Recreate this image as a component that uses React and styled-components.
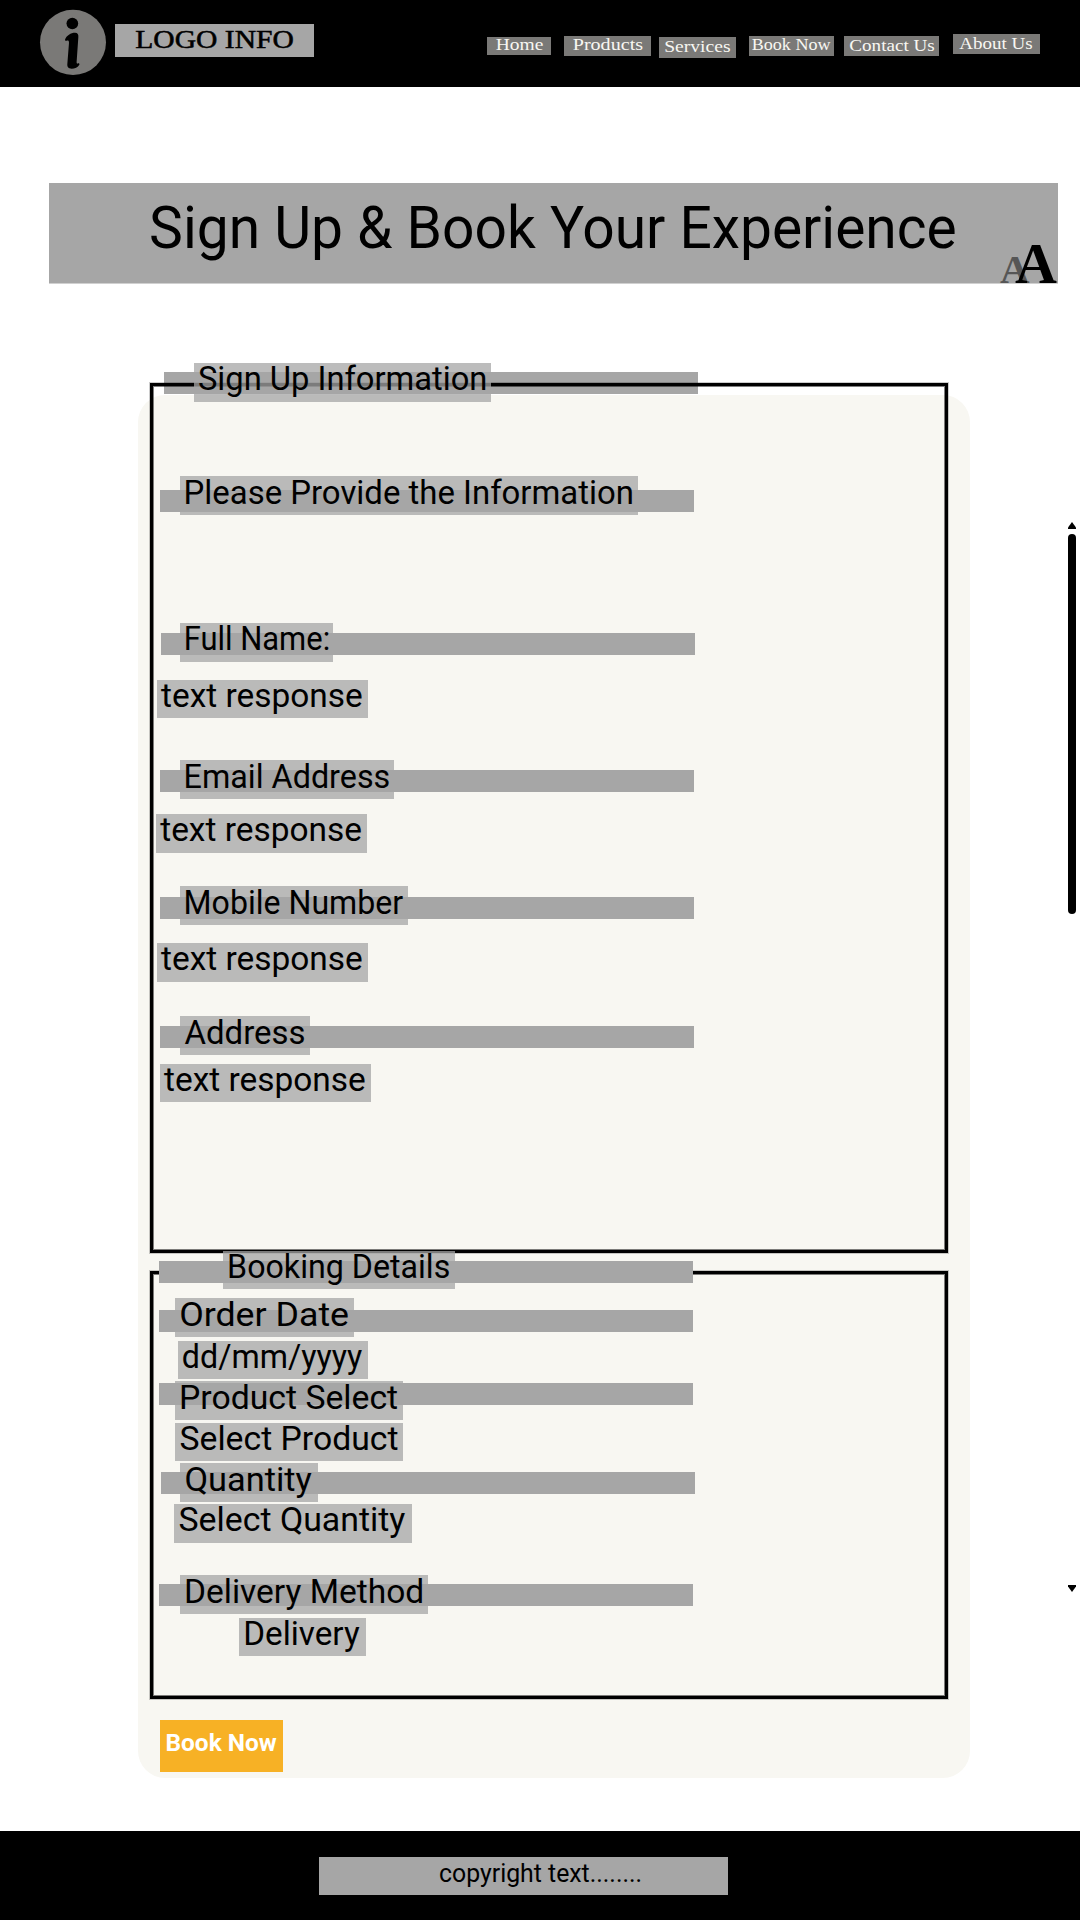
import React from "react";
import styled, { createGlobalStyle } from "styled-components";

const SANS = 'Roboto, "Liberation Sans", sans-serif';
const SERIF = '"Liberation Serif", "DejaVu Serif", serif';

const GlobalStyle = createGlobalStyle`
  body {
    margin: 0;
    background: #ffffff;
  }
  *, *::before, *::after {
    box-sizing: border-box;
  }
`;

/* ---------- text set to a given measure ---------- */

const Line = styled.span`
  display: block;
  width: max-content;
  white-space: pre;
  transform-origin: 0 0;
  font: ${(p) => p.$font};
  line-height: inherit;
`;

let ctx;
function measure(text, font) {
  if (!ctx) ctx = document.createElement("canvas").getContext("2d");
  ctx.font = font;
  const m = ctx.measureText(text);
  return { left: m.actualBoundingBoxLeft, right: m.actualBoundingBoxRight };
}

/* Stretches a line horizontally so its ink starts at `inset` and spans `width`. */
function Fit({ text, font, inset, width }) {
  const m = measure(text, font);
  const scale = width / (m.left + m.right);
  const shift = inset + m.left * scale;
  return (
    <Line $font={font} style={{ transform: `translateX(${shift}px) scaleX(${scale})` }}>
      {text}
    </Line>
  );
}

/* ---------- page ---------- */

const Page = styled.div`
  display: flex;
  flex-direction: column;
  width: 1080px;
  height: 1920px;
  overflow: hidden;
  background: #ffffff;
  color: #000000;
  isolation: isolate;
`;

const Header = styled.header`
  display: flex;
  align-items: flex-start;
  flex: none;
  height: 87px;
  background: #000000;
`;

const LogoMark = styled.svg`
  flex: none;
  width: 74px;
  height: 76px;
  margin: 4px 0 0 36px;
`;

const LogoName = styled.div`
  width: 199px;
  height: 33px;
  margin: 24px 0 0 5px;
  background: #a6a6a6;
  line-height: 32px;
  -webkit-text-stroke: 0.5px #000000;
`;

const Nav = styled.nav`
  display: flex;
  align-items: flex-start;
  margin-left: 173px;
`;

const NavItem = styled.a`
  width: ${(p) => p.$w}px;
  height: ${(p) => p.$h}px;
  margin: ${(p) => p.$top}px 0 0 ${(p) => p.$gap}px;
  background: #7a7977;
  color: #f8f7f2;
  line-height: ${(p) => p.$line}px;
`;

const Hero = styled.section`
  display: flex;
  position: relative;
  flex: none;
  width: 1009px;
  height: 100px;
  margin: 96px 0 0 49px;
  background: #a6a6a6;
  box-shadow: 0 1px 0 #d0d0d0;
`;

const HeroTitle = styled.h1`
  margin: 0;
  line-height: 89px;
`;

const SizeToggle = styled.div`
  position: absolute;
  right: 0;
  bottom: 0;
  width: 58px;
  height: 38px;
`;

const Glyph = styled.span`
  position: absolute;
  left: ${(p) => p.$x}px;
  bottom: ${(p) => p.$y}px;
  color: ${(p) => p.$color};
  font: bold ${(p) => p.$size}px/1 ${SERIF};
`;

const Body = styled.main`
  display: flex;
  align-items: flex-start;
  flex: 1;
  margin-top: 112px;
`;

const Card = styled.form`
  display: flex;
  flex-direction: column;
  width: 832px;
  height: 1383px;
  margin-left: 138px;
  padding-left: 12px;
  border-radius: 27px;
  background: #f8f7f2;
`;

const Frame = styled.section`
  display: flex;
  flex-direction: column;
  flex: none;
  width: 798px;
  height: ${(p) => p.$h}px;
  margin-top: ${(p) => p.$top}px;
  border: 3px solid #000000;
  box-shadow: 0 0 0 1px rgba(0, 0, 0, 0.2), inset 0 0 0 1px rgba(0, 0, 0, 0.5);
`;

const Row = styled.div`
  display: grid;
  justify-items: start;
  flex: none;
  height: ${(p) => p.$h}px;
  margin-top: ${(p) => p.$gap}px;
`;

const Bar = styled.div`
  grid-area: 1 / 1;
  position: relative;
  z-index: ${(p) => (p.$under ? -1 : 0)};
  width: 534px;
  height: 22px;
  margin: ${(p) => p.$y}px 0 0 ${(p) => p.$x}px;
  background: #a6a6a6;
`;

const Tag = styled.div`
  grid-area: 1 / 1;
  position: relative;
  width: ${(p) => p.$w}px;
  height: ${(p) => p.$h}px;
  margin-left: ${(p) => p.$x}px;
  background: rgba(166, 166, 166, 0.75);
  line-height: ${(p) => p.$line}px;
`;

const BookButton = styled.button`
  display: flex;
  align-items: flex-start;
  flex: none;
  width: 123px;
  height: 52px;
  margin: 21px 0 0 10px;
  padding: 0;
  border: 0;
  background: #f7b125;
  color: #ffffff;
  text-align: left;
  line-height: 47px;
`;

const Scroller = styled.aside`
  display: flex;
  flex-direction: column;
  align-items: center;
  width: 8px;
  margin: 127px 0 0 98px;
`;

const Arrow = styled.svg`
  display: block;
  width: 8px;
  height: 7px;
`;

const Thumb = styled.div`
  width: 8px;
  height: 380px;
  margin: 5px 0 671px;
  border-radius: 4px;
  background: #000000;
`;

const Footer = styled.footer`
  display: flex;
  flex: none;
  height: 89px;
  padding: 26px 0 0 319px;
  background: #000000;
`;

const Copyright = styled.div`
  width: 409px;
  height: 38px;
  background: #a6a6a6;
  line-height: 32px;
`;

/* ---------- content ---------- */

const NAV = [
  { text: "Home", w: 64, h: 18, top: 37, gap: 0, line: 16, inset: 8.7, ink: 47 },
  { text: "Products", w: 87, h: 20, top: 36, gap: 13, line: 18, inset: 8.7, ink: 69.6 },
  { text: "Services", w: 77, h: 21, top: 37, gap: 8, line: 20, inset: 6.3, ink: 64.6 },
  { text: "Book Now", w: 85, h: 20, top: 36, gap: 13, line: 18, inset: 2.7, ink: 79.7 },
  { text: "Contact Us", w: 95, h: 20, top: 36, gap: 10, line: 19, inset: 5.3, ink: 84.7 },
  { text: "About Us", w: 87, h: 20, top: 34, gap: 14, line: 20, inset: 6.3, ink: 72.7 },
];

const SIGN_UP = [
  { text: "Sign Up Information", gap: -23, h: 39, x: 41, w: 297, inset: 4.9, ink: 287, line: 31, bar: { x: 11, y: 9, under: true } },
  { text: "Please Provide the Information", gap: 74, h: 39, x: 27, w: 458, inset: 5.5, ink: 447, line: 33, bar: { x: 7, y: 14 } },
  { text: "Full Name:", gap: 108, h: 39, x: 27, w: 153, inset: 5.5, ink: 142.7, line: 31, bar: { x: 8, y: 10 } },
  { text: "text response", gap: 18, h: 38, x: 4, w: 211, inset: 4, ink: 201, line: 31 },
  { text: "Email Address", gap: 42, h: 39, x: 27, w: 214, inset: 5.5, ink: 203.5, line: 33, bar: { x: 7, y: 10 } },
  { text: "text response", gap: 15, h: 39, x: 3, w: 211, inset: 4.2, ink: 201, line: 31 },
  { text: "Mobile Number", gap: 33, h: 39, x: 27, w: 228, inset: 5.5, ink: 217.3, line: 33, bar: { x: 7, y: 11 } },
  { text: "text response", gap: 18, h: 39, x: 4, w: 211, inset: 4, ink: 201, line: 31 },
  { text: "Address", gap: 34, h: 39, x: 27, w: 130, inset: 4.5, ink: 119.7, line: 33, bar: { x: 7, y: 10 } },
  { text: "text response", gap: 9, h: 38, x: 7, w: 211, inset: 4, ink: 201, line: 31 },
];

const BOOKING = [
  { text: "Booking Details", gap: -23, h: 38, x: 70, w: 232, inset: 6, ink: 220, line: 31, bar: { x: 6, y: 10 } },
  { text: "Order Date", gap: 9, h: 39, x: 22, w: 179, inset: 5.2, ink: 168, line: 33, bar: { x: 6, y: 12 } },
  { text: "dd/mm/yyyy", gap: 4, h: 38, x: 25, w: 190, inset: 4.8, ink: 179.5, line: 31 },
  { text: "Product Select", gap: 2, h: 39, x: 22, w: 228, inset: 6, ink: 216.2, line: 33, bar: { x: 6, y: 2 } },
  { text: "Select Product", gap: 3, h: 38, x: 22, w: 228, inset: 5.5, ink: 217, line: 31 },
  { text: "Quantity", gap: 2, h: 39, x: 27, w: 138, inset: 5.5, ink: 126.5, line: 33, bar: { x: 8, y: 9 } },
  { text: "Select Quantity", gap: 2, h: 39, x: 21, w: 238, inset: 5.5, ink: 226, line: 31 },
  { text: "Delivery Method", gap: 32, h: 39, x: 27, w: 248, inset: 6, ink: 236.3, line: 33, bar: { x: 6, y: 9 } },
  { text: "Delivery", gap: 4, h: 38, x: 86, w: 127, inset: 6.2, ink: 114.6, line: 31 },
];

function Rows({ items }) {
  return items.map((r, i) => (
    <Row key={i} $gap={r.gap} $h={r.h}>
      {r.bar && <Bar $x={r.bar.x} $y={r.bar.y} $under={r.bar.under} />}
      <Tag $x={r.x} $w={r.w} $h={r.h} $line={r.line}>
        <Fit text={r.text} font={`400 33.5px ${SANS}`} inset={r.inset} width={r.ink} />
      </Tag>
    </Row>
  ));
}

export default function App() {
  return (
    <Page>
      <GlobalStyle />
      <Header>
        <LogoMark viewBox="0 0 222 228">
          <ellipse cx="111" cy="115" rx="99" ry="98" fill="#7a7977" />
          <ellipse cx="109" cy="58.5" rx="17.5" ry="17" />
          <path d="M87 107C91 94 105 86 117 86C125 86 128 91 127 100L122 172C121 179 124 181 126 178C129 177 131 179 130 182C126 190 116 194 107 194C97 194 93 188 94 180L99 116C99 108 95 109 92 110C89 111 87 110 87 107Z" />
        </LogoMark>
        <LogoName>
          <Fit text="LOGO INFO" font={`400 25.5px ${SERIF}`} inset={20.3} width={158} />
        </LogoName>
        <Nav>
          {NAV.map((n) => (
            <NavItem key={n.text} $w={n.w} $h={n.h} $top={n.top} $gap={n.gap} $line={n.line}>
              <Fit text={n.text} font={`400 17px ${SERIF}`} inset={n.inset} width={n.ink} />
            </NavItem>
          ))}
        </Nav>
      </Header>
      <Hero>
        <HeroTitle>
          <Fit text="Sign Up & Book Your Experience" font={`400 60px ${SANS}`} inset={102} width={804} />
        </HeroTitle>
        <SizeToggle>
          <Glyph $x={0} $y={-7} $size={41} $color="#565656">A</Glyph>
          <Glyph $x={15} $y={-10} $size={58} $color="#000000">A</Glyph>
        </SizeToggle>
      </Hero>
      <Body>
        <Card>
          <Frame $h={870} $top={-12}>
            <Rows items={SIGN_UP} />
          </Frame>
          <Frame $h={428} $top={18}>
            <Rows items={BOOKING} />
          </Frame>
          <BookButton type="button">
            <Fit text="Book Now" font={`700 24px ${SANS}`} inset={6.5} width={110.6} />
          </BookButton>
        </Card>
        <Scroller>
          <Arrow viewBox="0 0 8 7">
            <path d="M4 0L8 5.5V7H0V5.5Z" />
          </Arrow>
          <Thumb />
          <Arrow viewBox="0 0 8 7">
            <path d="M4 7L8 1.5V0H0V1.5Z" />
          </Arrow>
        </Scroller>
      </Body>
      <Footer>
        <Copyright>
          <Fit text="copyright text........" font={`400 26px ${SANS}`} inset={121} width={200.3} />
        </Copyright>
      </Footer>
    </Page>
  );
}
